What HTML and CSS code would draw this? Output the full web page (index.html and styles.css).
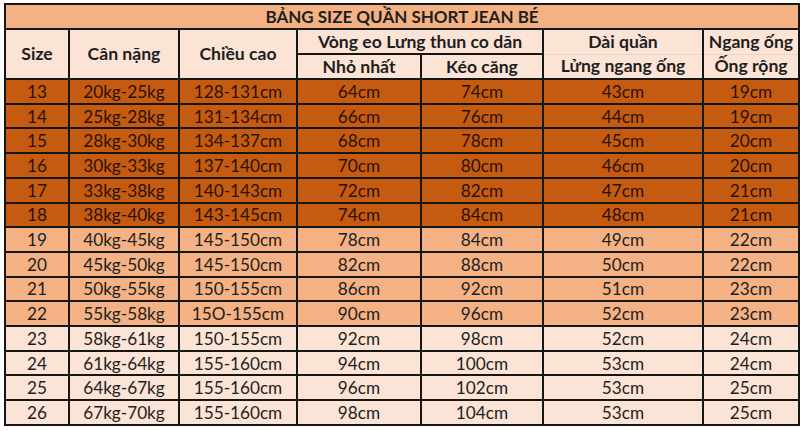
FILE: index.html
```html
<!DOCTYPE html>
<html lang="vi">
<head>
<meta charset="utf-8">
<title>Bảng size quần short jean bé</title>
<link rel="stylesheet" href="styles.css">
</head>
<body>
<table class="size-table">
  <colgroup>
    <col class="c-size">
    <col class="c-weight">
    <col class="c-height">
    <col class="c-min">
    <col class="c-max">
    <col class="c-len">
    <col class="c-leg">
  </colgroup>
  <thead>
    <tr class="title-row"><th colspan="7">BẢNG SIZE QUẦN SHORT JEAN BÉ</th></tr>
    <tr class="head-row">
      <th rowspan="2">Size</th>
      <th rowspan="2">Cân nặng</th>
      <th rowspan="2">Chiều cao</th>
      <th colspan="2">Vòng eo Lưng thun co dãn</th>
      <th class="no-bottom">Dài quần</th>
      <th class="no-bottom">Ngang ống</th>
    </tr>
    <tr class="head-row">
      <th>Nhỏ nhất</th>
      <th>Kéo căng</th>
      <th class="no-top">Lửng ngang ống</th>
      <th class="no-top">Ống rộng</th>
    </tr>
  </thead>
  <tbody>
    <tr class="dark"><td>13</td><td>20kg-25kg</td><td>128-131cm</td><td>64cm</td><td>74cm</td><td>43cm</td><td>19cm</td></tr>
    <tr class="dark"><td>14</td><td>25kg-28kg</td><td>131-134cm</td><td>66cm</td><td>76cm</td><td>44cm</td><td>19cm</td></tr>
    <tr class="dark"><td>15</td><td>28kg-30kg</td><td>134-137cm</td><td>68cm</td><td>78cm</td><td>45cm</td><td>20cm</td></tr>
    <tr class="dark"><td>16</td><td>30kg-33kg</td><td>137-140cm</td><td>70cm</td><td>80cm</td><td>46cm</td><td>20cm</td></tr>
    <tr class="dark"><td>17</td><td>33kg-38kg</td><td>140-143cm</td><td>72cm</td><td>82cm</td><td>47cm</td><td>21cm</td></tr>
    <tr class="dark"><td>18</td><td>38kg-40kg</td><td>143-145cm</td><td>74cm</td><td>84cm</td><td>48cm</td><td>21cm</td></tr>
    <tr class="mid"><td>19</td><td>40kg-45kg</td><td>145-150cm</td><td>78cm</td><td>84cm</td><td>49cm</td><td>22cm</td></tr>
    <tr class="mid"><td>20</td><td>45kg-50kg</td><td>145-150cm</td><td>82cm</td><td>88cm</td><td>50cm</td><td>22cm</td></tr>
    <tr class="mid"><td>21</td><td>50kg-55kg</td><td>150-155cm</td><td>86cm</td><td>92cm</td><td>51cm</td><td>23cm</td></tr>
    <tr class="mid"><td>22</td><td>55kg-58kg</td><td>15O-155cm</td><td>90cm</td><td>96cm</td><td>52cm</td><td>23cm</td></tr>
    <tr class="light"><td>23</td><td>58kg-61kg</td><td>150-155cm</td><td>92cm</td><td>98cm</td><td>52cm</td><td>24cm</td></tr>
    <tr class="light"><td>24</td><td>61kg-64kg</td><td>155-160cm</td><td>94cm</td><td>100cm</td><td>53cm</td><td>24cm</td></tr>
    <tr class="light"><td>25</td><td>64kg-67kg</td><td>155-160cm</td><td>96cm</td><td>102cm</td><td>53cm</td><td>25cm</td></tr>
    <tr class="light"><td>26</td><td>67kg-70kg</td><td>155-160cm</td><td>98cm</td><td>104cm</td><td>53cm</td><td>25cm</td></tr>
  </tbody>
</table>
</body>
</html>
```

FILE: styles.css
```css
html, body {
  margin: 0;
  padding: 0;
  background: #ffffff;
}

body {
  padding: 3px 0 0 4px;
  font-family: Lato, "Open Sans", sans-serif;
}

.size-table {
  border-collapse: collapse;
  table-layout: fixed;
  width: 794px;
  color: #1e1e1e;
}

.c-size { width: 64px; }
.c-weight { width: 110px; }
.c-height { width: 118px; }
.c-min { width: 124px; }
.c-max { width: 122px; }
.c-len { width: 160px; }
.c-leg { width: 96px; }

.size-table th,
.size-table td {
  border: 2px solid #161616;
  padding: 0;
  text-align: center;
  vertical-align: middle;
  white-space: nowrap;
  line-height: 20px;
}

.size-table th {
  font-weight: 700;
  font-size: 17.6px;
  height: 23px;
}

.size-table td {
  font-weight: 400;
  font-size: 17.2px;
  height: 21.71px;
  padding-top: 1px;
}

.title-row th {
  background: #f4b183;
  font-size: 17px;
}

.head-row th {
  background: #fbe4d6;
}

.head-row th.no-bottom {
  border-bottom: 1px solid #f3d3c0;
}

.head-row th.no-top {
  border-top: 1px solid #f3d3c0;
}

.dark td { background: #c55a11; color: #2a1205; }
.mid td { background: #f4b183; }
.light td { background: #fbe4d6; }
```
